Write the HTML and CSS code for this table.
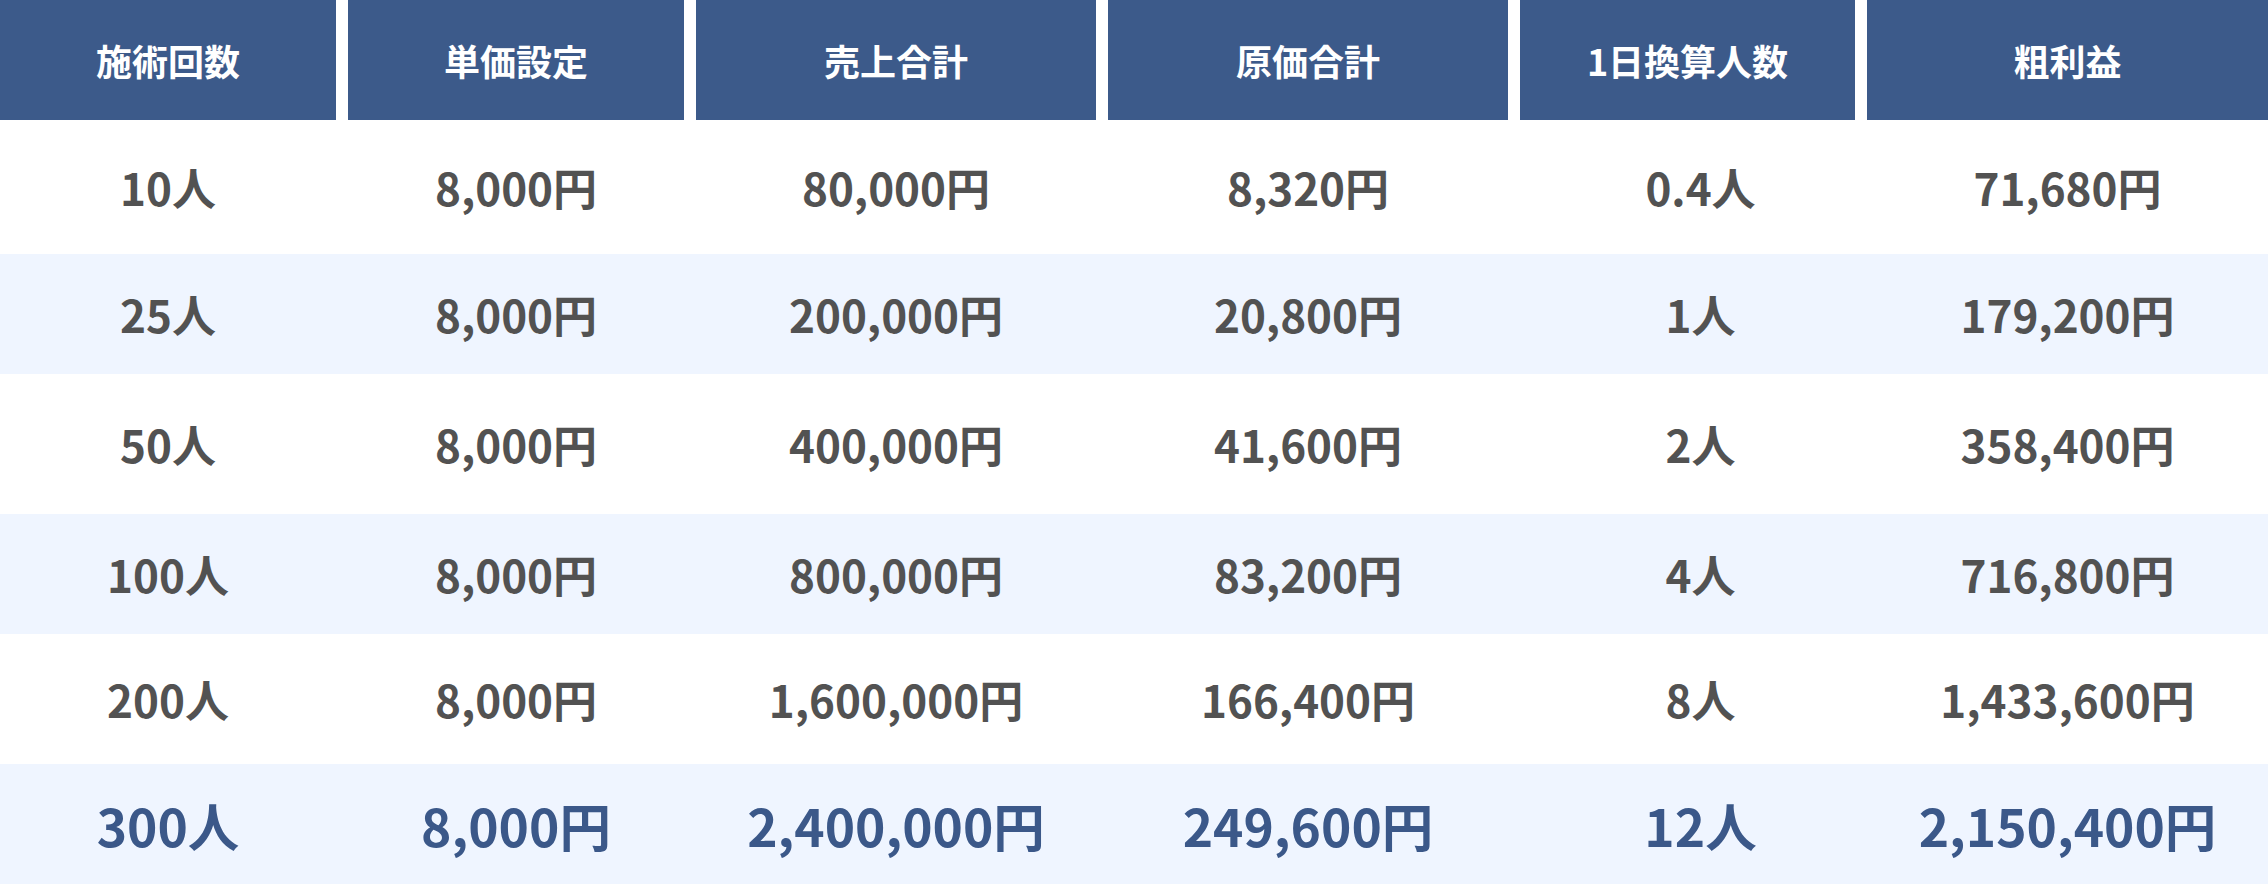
FILE: index.html
```html
<!DOCTYPE html>
<html lang="ja">
<head>
<meta charset="utf-8">
<title>料金シミュレーション</title>
<link rel="stylesheet" href="styles.css">
</head>
<body>
<div class="table">
  <div class="row head">
    <div class="cell">施術回数</div>
    <div class="cell">単価設定</div>
    <div class="cell">売上合計</div>
    <div class="cell">原価合計</div>
    <div class="cell">1日換算人数</div>
    <div class="cell">粗利益</div>
  </div>
  <div class="row body r1">
    <div class="cell">10人</div>
    <div class="cell">8,000円</div>
    <div class="cell">80,000円</div>
    <div class="cell">8,320円</div>
    <div class="cell c5">0.4人</div>
    <div class="cell">71,680円</div>
  </div>
  <div class="row body alt">
    <div class="cell">25人</div>
    <div class="cell">8,000円</div>
    <div class="cell">200,000円</div>
    <div class="cell">20,800円</div>
    <div class="cell c5">1人</div>
    <div class="cell">179,200円</div>
  </div>
  <div class="row body r3">
    <div class="cell">50人</div>
    <div class="cell">8,000円</div>
    <div class="cell">400,000円</div>
    <div class="cell">41,600円</div>
    <div class="cell c5">2人</div>
    <div class="cell">358,400円</div>
  </div>
  <div class="row body alt">
    <div class="cell">100人</div>
    <div class="cell">8,000円</div>
    <div class="cell">800,000円</div>
    <div class="cell">83,200円</div>
    <div class="cell c5">4人</div>
    <div class="cell">716,800円</div>
  </div>
  <div class="row body r5">
    <div class="cell">200人</div>
    <div class="cell">8,000円</div>
    <div class="cell">1,600,000円</div>
    <div class="cell">166,400円</div>
    <div class="cell c5">8人</div>
    <div class="cell">1,433,600円</div>
  </div>
  <div class="row body alt total">
    <div class="cell">300人</div>
    <div class="cell">8,000円</div>
    <div class="cell">2,400,000円</div>
    <div class="cell">249,600円</div>
    <div class="cell c5">12人</div>
    <div class="cell">2,150,400円</div>
  </div>
</div>
</body>
</html>
```
FILE: styles.css
```css
html, body {
  margin: 0;
  padding: 0;
  background: #ffffff;
}
body {
  font-family: "Noto Sans CJK JP", "Noto Sans", sans-serif;
}
.table {
  width: 2268px;
}
.row {
  display: grid;
  grid-template-columns: 336fr 336fr 400fr 400fr 335fr 401fr;
  column-gap: 12px;
}
.cell {
  display: flex;
  align-items: center;
  justify-content: center;
}
.head {
  height: 120px;
}
.head .cell {
  background: #3c5a8a;
  color: #ffffff;
  font-size: 36px;
  font-weight: 700;
}
.body {
  color: #525252;
  font-size: 44px;
  font-weight: 700;
  height: 120px;
}
.body .c5 {
  padding-left: 26px;
}
.r1 { height: 134px; }
.r3 { height: 140px; }
.r5 { height: 130px; }
.alt {
  background: #eff5ff;
}
.total {
  color: #3b5889;
  font-size: 51.5px;
  font-weight: 700;
}
```
